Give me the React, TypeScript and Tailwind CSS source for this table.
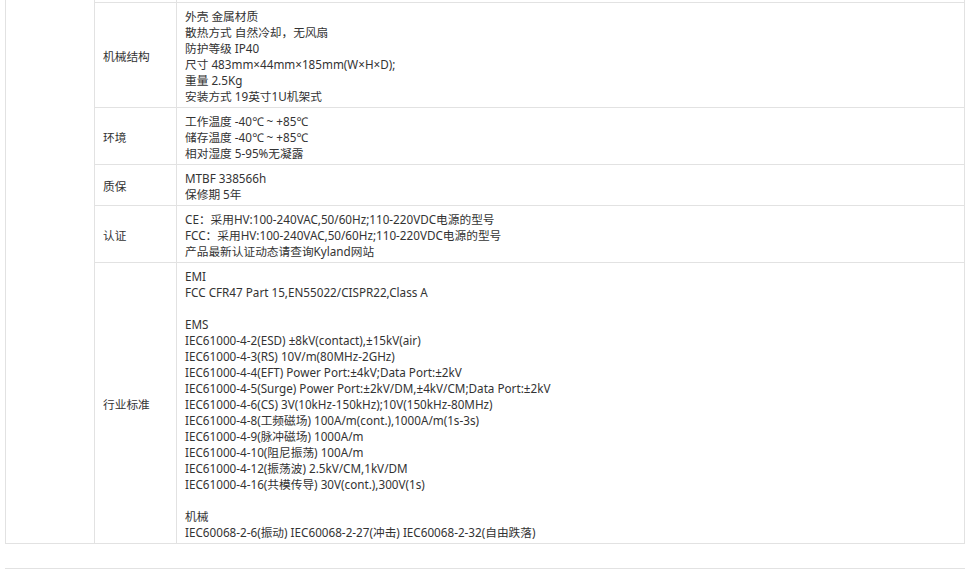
const rows: { label: string; lines: string[] }[] = [
  {
    label: "机械结构",
    lines: [
      "外壳 金属材质",
      "散热方式 自然冷却，无风扇",
      "防护等级 IP40",
      "尺寸 483mm×44mm×185mm(W×H×D);",
      "重量 2.5Kg",
      "安装方式 19英寸1U机架式",
    ],
  },
  {
    label: "环境",
    lines: ["工作温度 -40℃ ~ +85℃", "储存温度 -40℃ ~ +85℃", "相对湿度 5-95%无凝露"],
  },
  { label: "质保", lines: ["MTBF 338566h", "保修期 5年"] },
  {
    label: "认证",
    lines: [
      "CE：采用HV:100-240VAC,50/60Hz;110-220VDC电源的型号",
      "FCC：采用HV:100-240VAC,50/60Hz;110-220VDC电源的型号",
      "产品最新认证动态请查询Kyland网站",
    ],
  },
  {
    label: "行业标准",
    lines: [
      "EMI",
      "FCC CFR47 Part 15,EN55022/CISPR22,Class A",
      "",
      "EMS",
      "IEC61000-4-2(ESD) ±8kV(contact),±15kV(air)",
      "IEC61000-4-3(RS) 10V/m(80MHz-2GHz)",
      "IEC61000-4-4(EFT) Power Port:±4kV;Data Port:±2kV",
      "IEC61000-4-5(Surge) Power Port:±2kV/DM,±4kV/CM;Data Port:±2kV",
      "IEC61000-4-6(CS) 3V(10kHz-150kHz);10V(150kHz-80MHz)",
      "IEC61000-4-8(工频磁场) 100A/m(cont.),1000A/m(1s-3s)",
      "IEC61000-4-9(脉冲磁场) 1000A/m",
      "IEC61000-4-10(阻尼振荡) 100A/m",
      "IEC61000-4-12(振荡波) 2.5kV/CM,1kV/DM",
      "IEC61000-4-16(共模传导) 30V(cont.),300V(1s)",
      "",
      "机械",
      "IEC60068-2-6(振动) IEC60068-2-27(冲击) IEC60068-2-32(自由跌落)",
    ],
  },
];

export default function App() {
  return (
    <div
      className="w-[970px] h-[580px] bg-white text-[#333] text-[11.7px] leading-[16px] overflow-hidden"
      style={{ fontFamily: '"Noto Sans", "Noto Sans CJK SC", sans-serif' }}
    >
      <div className="pl-[5px] pr-[5px]">
        <table className="w-[960px] table-fixed border-collapse">
          <colgroup>
            <col className="w-[89px]" />
            <col className="w-[82px]" />
            <col />
          </colgroup>
          <tbody>
            <tr className="h-[2px]">
              <td rowSpan={rows.length + 1} className="border-x border-b border-[#e2e2e2] p-0" />
              <td className="border-x border-b border-[#e2e2e2] p-0" />
              <td className="border-x border-b border-[#e2e2e2] p-0" />
            </tr>
            {rows.map((r) => (
              <tr key={r.label}>
                <td className="border border-[#e2e2e2] px-2 pt-[5px] pb-[3px] align-middle">{r.label}</td>
                <td className="border border-[#e2e2e2] px-2 pt-[5px] pb-[3px]">
                  {r.lines.map((l, i) => (
                    <div key={i} className="h-4 whitespace-nowrap">
                      {l}
                    </div>
                  ))}
                </td>
              </tr>
            ))}
          </tbody>
        </table>
        <div className="mt-6 border-t border-[#e2e2e2] w-[960px]" />
      </div>
    </div>
  );
}
